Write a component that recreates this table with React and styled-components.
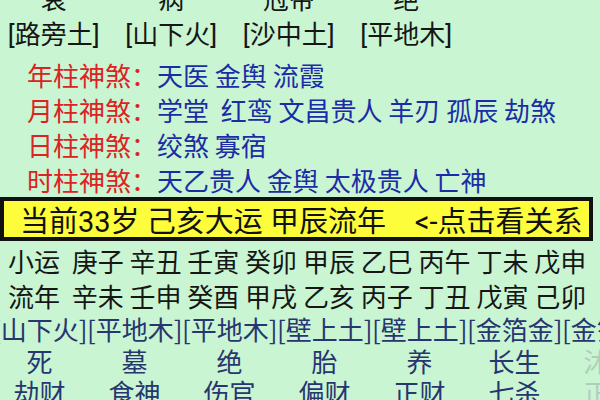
import React from "react";
import styled, { createGlobalStyle } from "styled-components";

const GlobalStyle = createGlobalStyle`
    body {
        margin: 0;
        background: #c9f5d2;
        font-family: "Noto Sans CJK SC", "Noto Sans", sans-serif;
    }
`;

const Page = styled.div`
    width: 600px;
    height: 400px;
    overflow: hidden;
    background: #c9f5d2;
`;

const StageGrid = styled.div`
    display: grid;
    grid-template-columns: repeat(4, 117.5px);
    margin-left: -5px;
    margin-top: ${props => props.$top || 0}px;
    font-family: Roboto, "Noto Sans CJK SC", sans-serif;
    font-size: 26px;
    line-height: 35px;
    color: #161616;
    text-align: center;
    white-space: nowrap;
`;

const ShaList = styled.div`
    padding-left: 27px;
    margin-top: 4px;
    font-size: 26px;
    line-height: 35px;
    white-space: pre;
`;

const ShaLabel = styled.span`
    color: #dc2222;
`;

const ShaItems = styled.span`
    color: #1c2ca6;
`;

const Banner = styled.div`
    box-sizing: border-box;
    width: 593px;
    height: 44px;
    border: 4px solid #111;
    background: #fdfd3c;
    display: flex;
    align-items: center;
    padding-left: 16px;
    font-family: Roboto, "Noto Sans CJK SC", sans-serif;
    font-size: 29px;
    color: #111;
    white-space: pre;
`;

const LuckRows = styled.div`
    padding: 2px 0 0 8px;
    font-size: 26px;
    line-height: 35px;
    color: #161616;
    white-space: pre;
`;

const CycleGrid = styled.div`
    display: grid;
    grid-template-columns: repeat(7, 95px);
    margin-left: -8px;
    font-size: 26px;
    line-height: 31.5px;
    color: #27366f;
    text-align: center;
    white-space: nowrap;
`;

const Cell = styled.div`
    color: ${props => (props.$faded ? "#b3cdbd" : "inherit")};
`;

const stages = ["衰", "病", "冠带", "绝"];
const nayinTop = ["[路旁土]", "[山下火]", "[沙中土]", "[平地木]"];

const shensha = [
    { label: "年柱神煞：", items: "天医 金舆 流霞" },
    { label: "月柱神煞：", items: "学堂  红鸾 文昌贵人 羊刃 孤辰 劫煞" },
    { label: "日柱神煞：", items: "绞煞 寡宿" },
    { label: "时柱神煞：", items: "天乙贵人 金舆 太极贵人 亡神" },
];

const nayinRow = ["[山下火]", "[平地木]", "[平地木]", "[壁上土]", "[壁上土]", "[金箔金]", "[金箔金]"];
const stageRow = ["死", "墓", "绝", "胎", "养", "长生", "沐浴"];
const godRow = ["劫财", "食神", "伤官", "偏财", "正财", "七杀", "正官"];

export default function App() {
    return (
        <Page>
            <GlobalStyle />
            <StageGrid $top={-17}>
                {stages.map((s, i) => <div key={i}>{s}</div>)}
            </StageGrid>
            <StageGrid>
                {nayinTop.map((s, i) => <div key={i}>{s}</div>)}
            </StageGrid>
            <ShaList>
                {shensha.map(row => (
                    <div key={row.label}>
                        <ShaLabel>{row.label}</ShaLabel>
                        <ShaItems>{row.items}</ShaItems>
                    </div>
                ))}
            </ShaList>
            <Banner>当前33岁 己亥大运 甲辰流年    &lt;-点击看关系</Banner>
            <LuckRows>
                <div>小运  庚子 辛丑 壬寅 癸卯 甲辰 乙巳 丙午 丁未 戊申</div>
                <div>流年  辛未 壬申 癸酉 甲戌 乙亥 丙子 丁丑 戊寅 己卯</div>
            </LuckRows>
            <CycleGrid>
                {nayinRow.map((s, i) => <Cell key={i}>{s}</Cell>)}
                {stageRow.map((s, i) => <Cell key={i} $faded={i === 6}>{s}</Cell>)}
                {godRow.map((s, i) => <Cell key={i} $faded={i === 6}>{s}</Cell>)}
            </CycleGrid>
        </Page>
    );
}
